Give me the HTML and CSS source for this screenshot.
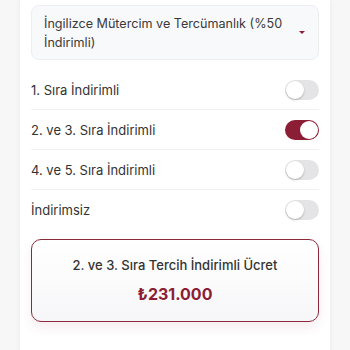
FILE: index.html
```html
<!DOCTYPE html>
<html lang="tr">
<head>
<meta charset="utf-8">
<link rel="stylesheet" href="styles.css">
</head>
<body>
<div class="card">
  <div class="select">
    <span class="select-text">İngilizce Mütercim ve Tercümanlık (%50 İndirimli)</span>
    <span class="caret"></span>
  </div>
  <ul class="options">
    <li class="row"><span>1. Sıra İndirimli</span><span class="toggle"></span></li>
    <li class="row"><span>2. ve 3. Sıra İndirimli</span><span class="toggle on"></span></li>
    <li class="row"><span>4. ve 5. Sıra İndirimli</span><span class="toggle"></span></li>
    <li class="row"><span>İndirimsiz</span><span class="toggle"></span></li>
  </ul>
  <div class="result">
    <div class="result-label">2. ve 3. Sıra Tercih İndirimli Ücret</div>
    <div class="result-price">₺231.000</div>
  </div>
</div>
</body>
</html>
```
FILE: styles.css
```css
html, body {
  margin: 0;
  padding: 0;
  background: #f7f7f8;
  height: 350px;
  overflow: hidden;
}
body {
  font-family: Inter, "Noto Sans", sans-serif;
  color: #333;
}
.card {
  margin: 0 20px;
  background: #fff;
  box-shadow: 0 0 6px rgba(0,0,0,0.06);
  padding: 5px 11px 30px;
  min-height: 360px;
  box-sizing: border-box;
}
.select {
  display: flex;
  align-items: center;
  background: #f8f9fb;
  border: 1px solid #eceef1;
  border-radius: 8px;
  padding: 8px 13px 8px 12px;
  height: 55px;
  box-sizing: border-box;
}
.select-text {
  flex: 1;
  font-size: 12.6px;
  line-height: 19px;
  color: #3a3a3a;
  padding-right: 4px;
}
.caret {
  width: 0;
  height: 0;
  border-left: 3px solid transparent;
  border-right: 3px solid transparent;
  border-top: 3px solid #8b1e34;
}
.options {
  list-style: none;
  margin: 10px 0 0;
  padding: 0;
}
.row {
  display: flex;
  align-items: center;
  justify-content: space-between;
  height: 40px;
  font-size: 13px;
  color: #333;
  border-bottom: 1px solid #f1f1f3;
  box-sizing: border-box;
}
.row:last-child {
  border-bottom: none;
}
.toggle {
  position: relative;
  width: 34px;
  height: 20px;
  border-radius: 10px;
  background: #e4e4e6;
}
.toggle::after {
  content: "";
  position: absolute;
  left: 1px;
  top: 1px;
  width: 18px;
  height: 18px;
  border-radius: 50%;
  background: #fff;
  box-shadow: 0 1px 2px rgba(0,0,0,0.25);
}
.toggle.on {
  background: #8b1e34;
}
.toggle.on::after {
  left: 15px;
  box-shadow: none;
}
.result {
  margin-top: 9px;
  border: 1.5px solid #8b2a3c;
  border-radius: 10px;
  background: linear-gradient(#fff, #f7f7f9);
  box-shadow: 0 6px 12px rgba(139,30,52,0.08);
  padding: 16px 10px 17px;
  text-align: center;
}
.result-label {
  font-size: 13px;
  font-weight: 500;
  color: #333;
  line-height: 18px;
}
.result-price {
  margin-top: 10px;
  font-size: 16px;
  font-weight: 700;
  color: #8b1e34;
  line-height: 20px;
}
```
